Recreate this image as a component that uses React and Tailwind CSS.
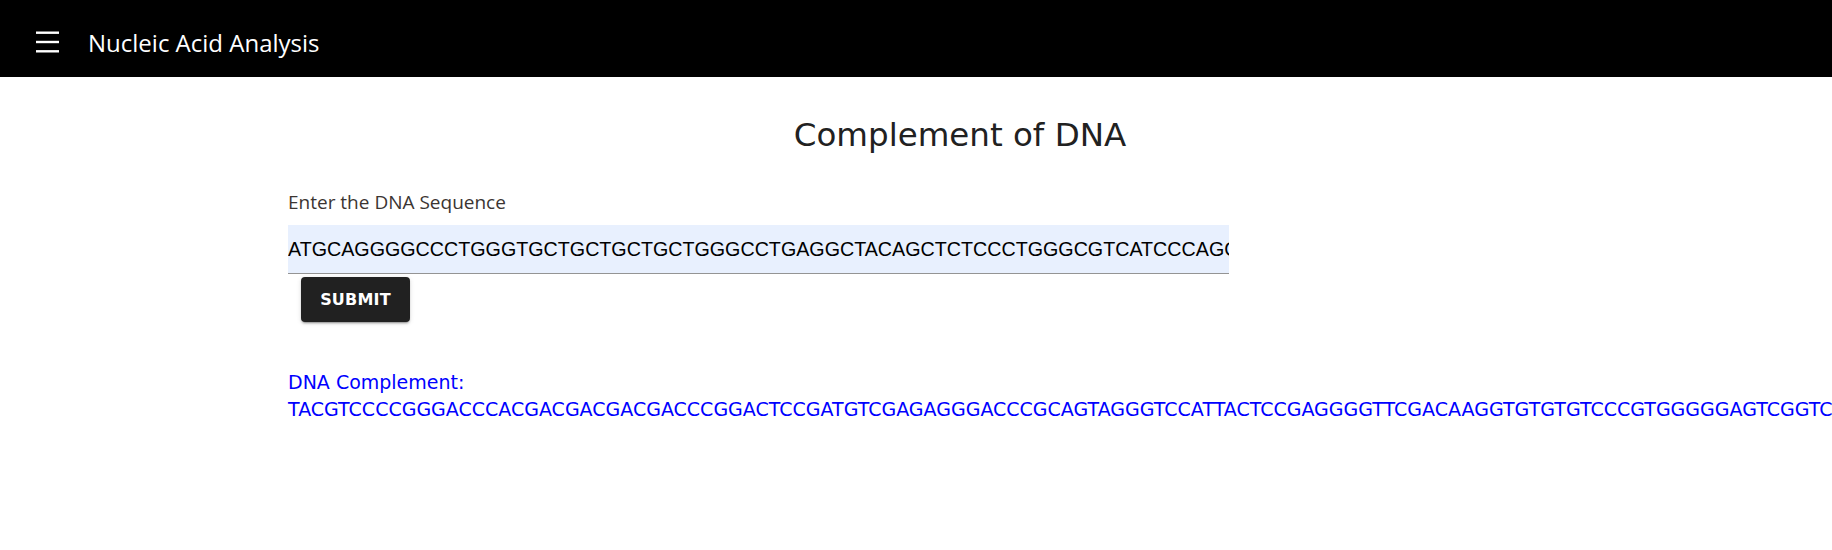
import React, { useState } from "react";

const DNA =
  "ATGCAGGGGCCCTGGGTGCTGCTGCTGCTGGGCCTGAGGCTACAGCTCTCCCTGGGCGTCATCCCAGGTAATGAGGCTCCCCAAGCTGTTCCACACACAGGGCACCCCCTCAGCCAGAGCCTGGCTGCTGAG";

const PAIRS = { A: "T", T: "A", G: "C", C: "G" };

function complement(seq) {
  return seq
    .split("")
    .map((b) => PAIRS[b] || b)
    .join("");
}

function MenuIcon() {
  return (
    <svg width="23" height="22" viewBox="0 0 23 22" fill="#ffffff">
      <rect x="0" y="0.5" width="23" height="2.4" />
      <rect x="0" y="9.8" width="23" height="2.4" />
      <rect x="0" y="19.1" width="23" height="2.4" />
    </svg>
  );
}

export default function App() {
  const [seq, setSeq] = useState(DNA);
  const [result, setResult] = useState(complement(DNA));

  return (
    <div className="w-full min-h-[550px] bg-white overflow-hidden">
      {/* App bar */}
      <header className="h-[77px] bg-black flex items-center pt-[9px] pl-[36px]">
        <button type="button" className="w-[23px] h-[22px] flex items-center -mt-[2px]" aria-label="menu">
          <MenuIcon />
        </button>
        <h1
          className="ml-[29px] text-white text-[24px] leading-[32px] font-['Open_Sans',sans-serif]"
        >
          Nucleic Acid Analysis
        </h1>
      </header>

      {/* Content */}
      <main className="pl-[288px] pr-[200px]">
        <h2 className="mt-[38px] text-center text-[32.5px] leading-[40px] text-[#212121] font-['DejaVu_Sans',sans-serif]">
          Complement of DNA
        </h2>

        <label
          htmlFor="dna"
          className="block mt-[34px] text-[19px] leading-[26px] text-[#3b3532] font-['Open_Sans',sans-serif]"
        >
          Enter the DNA Sequence
        </label>
        <input
          id="dna"
          type="text"
          value={seq}
          onChange={(e) => setSeq(e.target.value.toUpperCase())}
          className="block mt-[10px] w-[941px] h-[49px] px-0 bg-[#e8f0fe] border-b border-[#949494] text-[19.7px] text-black font-['Liberation_Sans',Arial,sans-serif] outline-none"
        />
        <button
          type="button"
          onClick={() => setResult(complement(seq))}
          className="mt-[3px] ml-[13px] w-[109px] h-[45px] rounded-[4px] bg-[#212121] text-white text-[16px] font-bold tracking-[0.2px] font-['DejaVu_Sans',sans-serif] shadow-[0_3px_1px_-2px_rgba(0,0,0,0.2),0_2px_2px_0_rgba(0,0,0,0.14),0_1px_5px_0_rgba(0,0,0,0.12)]"
        >
          SUBMIT
        </button>

        <div className="mt-[47px] text-[19px] leading-[27px] text-[#0000ff] font-['DejaVu_Sans',sans-serif] whitespace-nowrap">
          <p>DNA Complement:</p>
          <p>{result}</p>
        </div>
      </main>
    </div>
  );
}
